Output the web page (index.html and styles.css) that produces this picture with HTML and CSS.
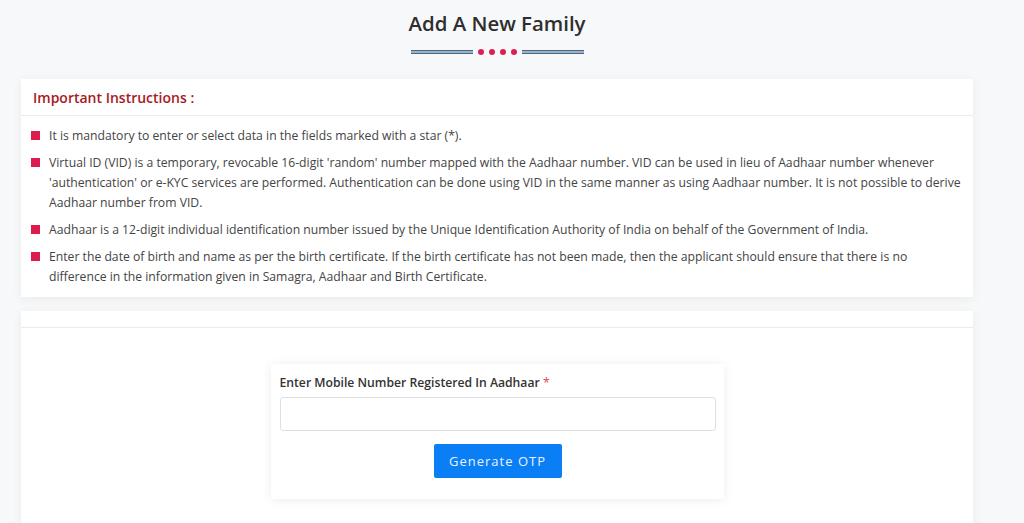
FILE: index.html
```html
<!DOCTYPE html>
<html lang="en">
<head>
<meta charset="utf-8">
<title>Add A New Family</title>
<link rel="stylesheet" href="styles.css">
</head>
<body>
<main class="page">
  <header class="page-head">
    <h1 class="page-title">Add A New Family</h1>
    <div class="divider">
      <span class="divider-line"></span>
      <span class="dot"></span><span class="dot"></span><span class="dot"></span><span class="dot"></span>
      <span class="divider-line"></span>
    </div>
  </header>

  <section class="card">
    <div class="card-head">
      <h2 class="card-title">Important Instructions :</h2>
    </div>
    <ul class="instructions">
      <li>It is mandatory to enter or select data in the fields marked with a star (*).</li>
      <li>Virtual ID (VID) is a temporary, revocable 16-digit 'random' number mapped with the Aadhaar number. VID can be used in lieu of Aadhaar number whenever 'authentication' or e-KYC services are performed. Authentication can be done using VID in the same manner as using Aadhaar number. It is not possible to derive Aadhaar number from VID.</li>
      <li>Aadhaar is a 12-digit individual identification number issued by the Unique Identification Authority of India on behalf of the Government of India.</li>
      <li>Enter the date of birth and name as per the birth certificate. If the birth certificate has not been made, then the applicant should ensure that there is no difference in the information given in Samagra, Aadhaar and Birth Certificate.</li>
    </ul>
  </section>

  <section class="card card-form">
    <div class="card-head card-head-empty"></div>
    <div class="form-body">
      <form class="otp-box">
        <label class="field-label" for="mobile">Enter Mobile Number Registered In Aadhaar <span class="req">*</span></label>
        <input class="field-input" id="mobile" type="text">
        <div class="btn-row">
          <button class="btn-primary" type="button">Generate OTP</button>
        </div>
      </form>
    </div>
  </section>
</main>
</body>
</html>
```

FILE: styles.css
```css
* { box-sizing: border-box; }
html, body { margin: 0; padding: 0; }
body {
  background: #f7f8f9;
  font-family: "Open Sans", "Noto Sans", "Liberation Sans", sans-serif;
  color: #333;
  height: 523px;
  overflow: hidden;
}
.page {
  width: 952px;
  margin-left: 21px;
}
.page-head {
  display: flex;
  flex-direction: column;
  align-items: center;
  padding-top: 8px;
}
.page-title {
  margin: 0;
  font-size: 20.4px;
  font-weight: 600;
  line-height: 30px;
  color: #2e2e2e;
}
.divider {
  display: flex;
  align-items: center;
  gap: 5px;
  margin-top: 10px;
  height: 8px;
}
.divider-line {
  width: 62px;
  height: 4px;
  border-top: 1.5px solid #4b6786;
  border-bottom: 1.5px solid #4b6786;
  background: #9fb0c2;
}
.dot {
  width: 6px;
  height: 6px;
  border-radius: 50%;
  background: #dc1f52;
}
.card {
  background: #fff;
  box-shadow: 0 2px 10px rgba(0,0,0,0.06);
  margin-top: 23px;
}
.card-head {
  height: 37px;
  border-bottom: 1px solid #e9ecef;
  display: flex;
  align-items: center;
  padding-left: 12px;
}
.card-title {
  margin: 0;
  font-size: 14px;
  font-weight: 600;
  color: #a8191e;
}
.instructions {
  list-style: none;
  margin: 0;
  padding: 10px 10px 10px 28px;
  font-size: 12.2px;
  line-height: 20px;
  color: #444;
}
.instructions li {
  position: relative;
  margin-bottom: 7px;
}
.instructions li:last-child { margin-bottom: 0; }
.instructions li::before {
  content: "";
  position: absolute;
  left: -18px;
  top: 5px;
  width: 9px;
  height: 9px;
  background: #dd1b4f;
}
.card-form { margin-top: 14px; }
.card-head-empty { height: 17px; }
.form-body {
  display: flex;
  justify-content: center;
  padding-top: 36px;
  padding-bottom: 30px;
}
.otp-box {
  width: 453px;
  background: #fff;
  box-shadow: 0 1px 10px rgba(0,0,0,0.08);
  padding: 10px 8px 21px 9px;
  display: flex;
  flex-direction: column;
}
.field-label {
  font-size: 12.2px;
  font-weight: 600;
  color: #333;
  line-height: 17px;
}
.req { color: #e0455a; font-weight: 400; }
.field-input {
  margin-top: 6px;
  height: 34px;
  border: 1px solid #dcdfe3;
  border-radius: 3px;
  font: inherit;
  padding: 0 10px;
}
.btn-row {
  display: flex;
  justify-content: center;
  margin-top: 13px;
}
.btn-primary {
  width: 128px;
  height: 34px;
  border: none;
  border-radius: 2px;
  background: #0a7ff5;
  color: #e9f2ff;
  font-family: "Open Sans", "Noto Sans", sans-serif;
  font-size: 13px;
  letter-spacing: 1px;
  cursor: pointer;
}
```
